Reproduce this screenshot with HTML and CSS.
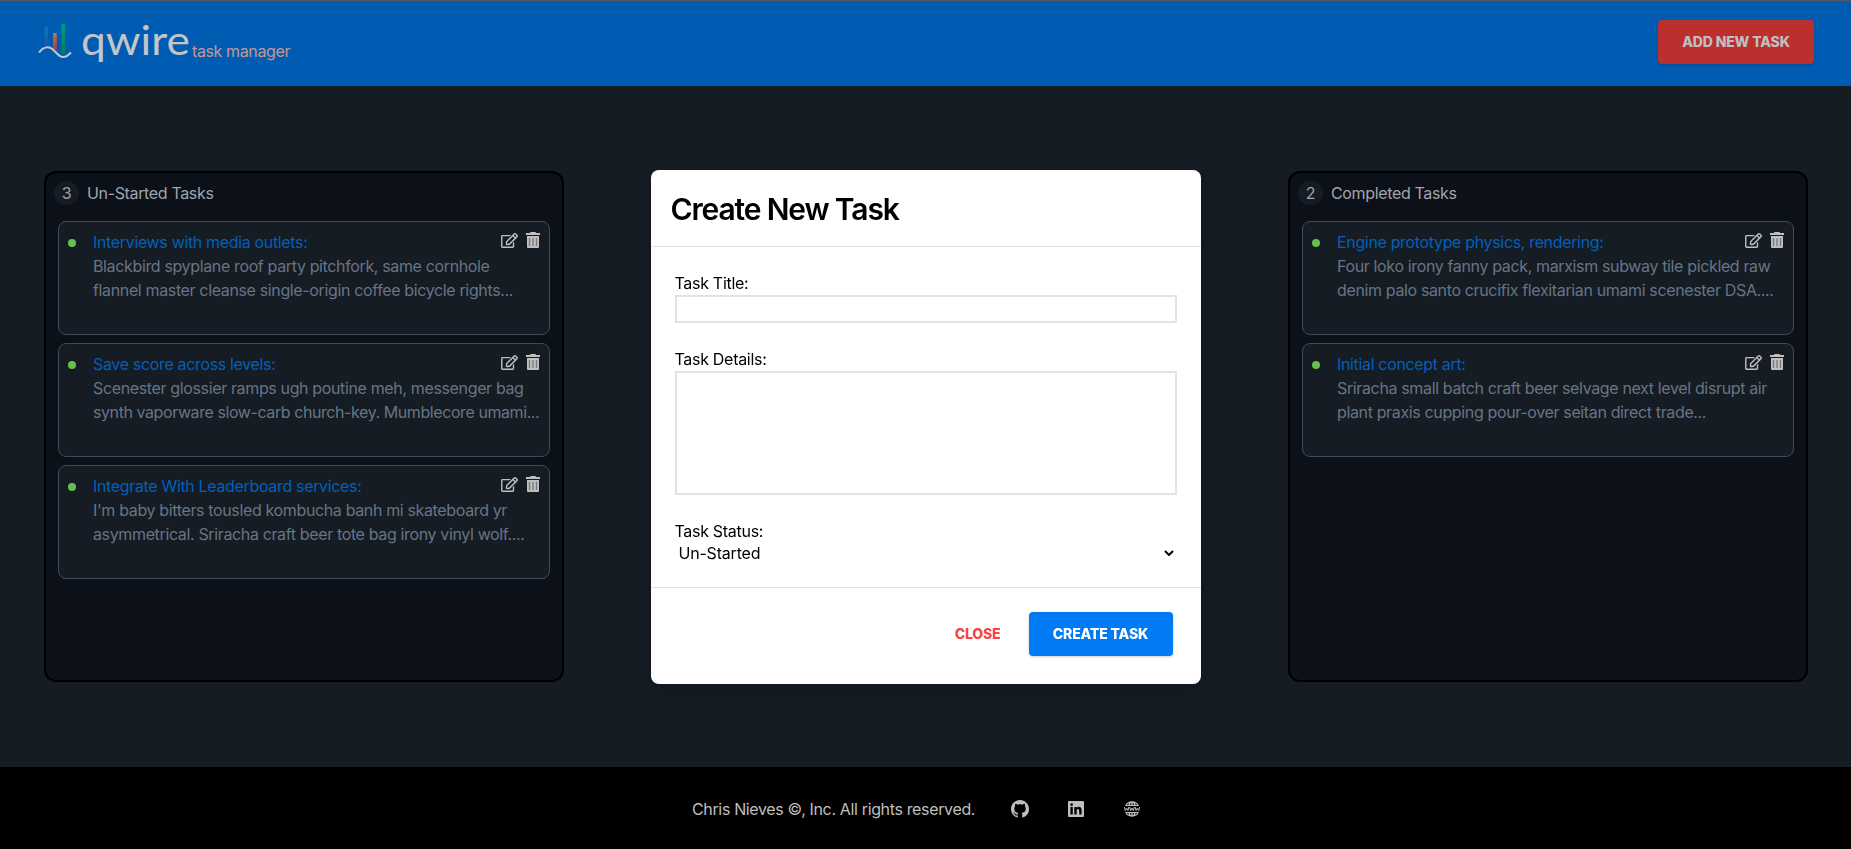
FILE: index.html
```
<!DOCTYPE html>
<html lang="en">
<head>
<meta charset="utf-8">
<title>Qwire Task Manager</title>
<link rel="stylesheet" href="styles.css">
</head>
<body>
<svg class="sprite" aria-hidden="true">
  <symbol id="edit" viewBox="0 0 576 512"><path d="M402.3 344.9l32-32c5-5 13.7-1.5 13.7 5.7V464c0 26.5-21.5 48-48 48H48c-26.5 0-48-21.5-48-48V112c0-26.5 21.5-48 48-48h273.5c7.1 0 10.7 8.6 5.7 13.7l-32 32c-1.5 1.5-3.5 2.3-5.7 2.3H48v352h352V350.5c0-2.1.8-4.1 2.3-5.6zm156.6-201.8L296.3 405.7l-90.4 10c-26.2 2.9-48.5-19.2-45.6-45.6l10-90.4L432.9 17.1c22.9-22.9 59.9-22.9 82.7 0l43.2 43.2c22.9 22.9 22.9 60 .1 82.8zM460.1 174L402 115.9 216.2 301.8l-7.3 65.3 65.3-7.3L460.1 174zm64.8-79.7l-43.2-43.2c-4.1-4.1-10.8-4.1-14.8 0L436 82l58.1 58.1 30.9-30.9c4-4.2 4-10.8-.1-14.9z"/></symbol>
  <symbol id="trash" viewBox="0 0 14 16"><path d="M4.5 0h5l.6 1H14v2H0V1h3.900zM1 4h12v11a1 1 0 0 1-1 1H2a1 1 0 0 1-1-1z"/><path d="M3.500 6v8M7 6v8M10.500 6v8" stroke="#777a7c" stroke-width="1.300"/></symbol>
</svg>
<header class="header">
  <div class="brand">
    <svg class="mark" width="36" height="40" viewBox="0 0 36 40">
      <defs>
        <linearGradient id="b" x2="0" y2="1"><stop stop-color="#007fae"/><stop offset="1" stop-color="#1a55a8"/></linearGradient>
        <linearGradient id="o" x2="0" y2="1"><stop stop-color="#bd7937"/><stop offset="1" stop-color="#bb3b35"/></linearGradient>
        <linearGradient id="g" x2="0" y2="1"><stop stop-color="#009a87"/><stop offset="1" stop-color="#008149"/></linearGradient>
      </defs>
      <rect x="6.500" y="7" width="3.500" height="18" fill="url(#b)"/>
      <rect x="15" y="13" width="3.700" height="16" fill="url(#o)"/>
      <rect x="23.500" y="4" width="3.700" height="30" fill="url(#g)"/>
      <path d="M1 32.500C5 27 11 25 16 30.500S25 41 33 32.500" fill="none" stroke="#c3c5c8" stroke-width="2"/>
    </svg>
    <span class="wordmark">qwire</span>
    <span class="tagline">task manager</span>
  </div>
  <button class="btn btn-add">ADD NEW TASK</button>
</header>
<main class="board">
  <section class="column">
    <h2 class="column-head"><span class="count">3</span><span>Un-Started Tasks</span></h2>
    <article class="card"><i class="dot"></i><div class="copy"><h3>Interviews with media outlets:</h3><p>Blackbird spyplane roof party pitchfork, same cornhole<br>flannel master cleanse single-origin coffee bicycle rights...</p></div><div class="actions"><svg class="edit"><use href="#edit"/></svg><svg class="trash"><use href="#trash"/></svg></div></article>
    <article class="card"><i class="dot"></i><div class="copy"><h3>Save score across levels:</h3><p>Scenester glossier ramps ugh poutine meh, messenger bag<br><span class="tight">synth vaporware slow-carb church-key. Mumblecore umami...</span></p></div><div class="actions"><svg class="edit"><use href="#edit"/></svg><svg class="trash"><use href="#trash"/></svg></div></article>
    <article class="card"><i class="dot"></i><div class="copy"><h3>Integrate With Leaderboard services:</h3><p>I'm baby bitters tousled kombucha banh mi skateboard yr<br>asymmetrical. Sriracha craft beer tote bag irony vinyl wolf....</p></div><div class="actions"><svg class="edit"><use href="#edit"/></svg><svg class="trash"><use href="#trash"/></svg></div></article>
  </section>
  <section class="column">
    <h2 class="column-head"><span class="count">2</span><span>Completed Tasks</span></h2>
    <article class="card"><i class="dot"></i><div class="copy"><h3>Engine prototype physics, rendering:</h3><p>Four loko irony fanny pack, marxism subway tile pickled raw<br>denim palo santo crucifix flexitarian umami scenester DSA....</p></div><div class="actions"><svg class="edit"><use href="#edit"/></svg><svg class="trash"><use href="#trash"/></svg></div></article>
    <article class="card"><i class="dot"></i><div class="copy"><h3>Initial concept art:</h3><p>Sriracha small batch craft beer selvage next level disrupt air<br>plant praxis cupping pour-over seitan direct trade...</p></div><div class="actions"><svg class="edit"><use href="#edit"/></svg><svg class="trash"><use href="#trash"/></svg></div></article>
  </section>
</main>
<footer class="footer">
  <span class="legal">Chris Nieves ©, Inc. All rights reserved.</span>
  <svg width="18" height="18" viewBox="0 0 16 16"><path d="M8 0C3.580 0 0 3.580 0 8c0 3.540 2.290 6.530 5.470 7.590.4.070.55-.17.55-.38 0-.19-.01-.82-.01-1.490-2.010.37-2.530-.49-2.690-.94-.09-.23-.48-.94-.82-1.130-.28-.15-.68-.52-.01-.53.63-.01 1.080.58 1.230.82.72 1.210 1.870.87 2.330.66.07-.52.28-.87.51-1.070-1.780-.2-3.640-.89-3.640-3.950 0-.87.31-1.590.82-2.150-.08-.2-.36-1.020.08-2.120 0 0 .67-.21 2.200.82.64-.18 1.320-.27 2-.27s1.360.09 2 .27c1.530-1.040 2.200-.82 2.200-.82.44 1.100.16 1.920.08 2.120.51.56.82 1.270.82 2.150 0 3.070-1.870 3.750-3.650 3.950.29.25.54.73.54 1.480 0 1.070-.01 1.930-.01 2.200 0 .21.15.46.55.38A8.010 8.010 0 0 0 16 8c0-4.420-3.580-8-8-8z"/></svg>
  <svg width="16" height="16" viewBox="0 0 16 16"><path fill-rule="evenodd" d="M1 0h14a1 1 0 0 1 1 1v14a1 1 0 0 1-1 1H1a1 1 0 0 1-1-1V1a1 1 0 0 1 1-1zM2.400 6v7.600h2.400V6zM3.600 2.200a1.400 1.400 0 1 0 0 2.800 1.400 1.400 0 0 0 0-2.800zM6.300 6v7.600h2.400V9.800c0-2.300 2.500-2.300 2.500 0v3.800h2.400V9c0-3.700-3.600-3.900-4.900-1.900V6z"/></svg>
  <svg class="web" width="16" height="16" viewBox="0 0 16 16">
    <path d="M1 5a7.600 7.600 0 0 1 14 0zM1 11a7.600 7.600 0 0 0 14 0z"/>
    <path d="M2.800 4Q3.800 2.500 5 2L4.400 4zM5.900 4Q6.400 2 7.300 1.500V4zM8.700 4V1.500Q9.600 2 10.100 4zM11.600 4L11 2Q12.200 2.500 13.200 4zM2.800 12Q3.800 13.500 5 14L4.400 12zM5.900 12Q6.400 14 7.300 14.500V12zM8.700 12v2.500Q9.600 14 10.100 12zM11.600 12L11 14q1.200-.5 2.200-2z" fill="#000"/>
    <path d="M.3 6l1 3.600L2.600 7l1.300 2.600L4.900 6M5.700 6l1 3.600L8 7l1.300 2.600L10.300 6M11.100 6l1 3.600L13.400 7l1.300 2.600L15.700 6" fill="none" stroke="#bfbfbf"/>
  </svg>
</footer>
<div class="overlay">
  <form class="modal">
    <h1 class="modal-head">Create New Task</h1>
    <div class="modal-body">
      <label for="t">Task Title:</label>
      <input id="t" class="field">
      <label for="d">Task Details:</label>
      <textarea id="d" class="field area"></textarea>
      <label for="s">Task Status:</label>
      <div class="select" id="s"><span>Un-Started</span><svg width="10" height="6" viewBox="0 0 10 6"><path d="M1 1l4 4 4-4" fill="none" stroke="#000" stroke-width="2"/></svg></div>
    </div>
    <div class="modal-foot"><button class="close" type="button">CLOSE</button><button class="btn btn-create" type="button">CREATE TASK</button></div>
  </form>
</div>
</body>
</html>
```
FILE: styles.css
```
* { box-sizing: border-box; margin: 0; }
body {
  height: 849px;
  display: flex;
  flex-direction: column;
  overflow: hidden;
  background: #151c23;
  font: 16px/24px Inter, "Liberation Sans", sans-serif;
  letter-spacing: -0.35px;
}
svg { display: block; fill: #bfbfbf; flex: none; }
.sprite { position: absolute; width: 0; height: 0; }
h2, h3 { font-size: 16px; font-weight: 400; }
button { border: 0; font: 800 14px/20px Inter, sans-serif; letter-spacing: -0.15px; }

.header {
  height: 86px;
  padding: 0 37px 0 38px;
  display: flex;
  justify-content: space-between;
  background: #005cb3;
  border-top: 1px solid #56595c;
}
.brand { display: flex; align-items: flex-start; color: #c3c5c8; }
.mark { margin-top: 19px; }
.wordmark {
  width: 111px;
  margin: 14px 0 0 7px;
  font: 41px/50px Lato, sans-serif;
  letter-spacing: 0;
  transform: scaleX(1.08);
  transform-origin: left;
}
.tagline { margin-top: 38px; color: #c49797; letter-spacing: -0.38px; }
.btn { height: 44px; border-radius: 4px; padding: 0; box-shadow: 0 1px 3px rgba(0, 0, 0, 0.2); }
.btn-add { width: 156px; margin-top: 19px; color: #bfbfbf; background: #bc2f2f; }

.board {
  flex: 1;
  display: flex;
  justify-content: space-between;
  padding: 85px 43px 0 44px;
}
.column {
  width: 520px;
  height: 511px;
  padding: 6px 12px;
  border: 2px solid #000;
  border-radius: 12px;
  background: #0c1018;
}
.column-head {
  display: flex;
  align-items: center;
  gap: 8px;
  height: 28px;
  margin: 0 0 14px -4px;
  color: #a0a5ad;
}
.count { width: 25px; height: 24px; border-radius: 12px; background: #151c23; text-align: center; }
.card {
  height: 114px;
  margin-bottom: 8px;
  padding: 8px 9px;
  display: flex;
  border: 1px solid #3e4b5c;
  border-radius: 8px;
  background: #151c23;
  white-space: nowrap;
}
.dot { width: 8px; height: 8px; margin: 9px 17px 0 0; border-radius: 50%; background: #6abf4b; }
.copy { flex: 1; width: 0; color: #687486; letter-spacing: -0.36px; }
.copy h3 { color: #0060bb; letter-spacing: -0.34px; }
.tight { letter-spacing: -0.42px; }
.actions { display: flex; gap: 8px; padding-top: 2px; }
.edit { width: 17px; height: 15px; margin-top: 1px; }
.trash { width: 14px; height: 16px; }

.footer {
  height: 82px;
  padding: 2px 0 0 692px;
  display: flex;
  align-items: center;
  gap: 39px;
  background: #000;
  color: #bfbfbf;
  white-space: nowrap;
}
.legal { width: 280px; }
.web { margin-left: 1px; }

.overlay { position: fixed; inset: 0; padding-top: 170px; display: flex; justify-content: center; align-items: flex-start; }
.modal {
  width: 550px;
  height: 514px;
  border-radius: 8px;
  background: #fff;
  color: #000;
  box-shadow: 0 4px 16px rgba(0, 0, 0, 0.2);
}
.modal-head {
  height: 77px;
  padding: 20px 20px 0;
  border-bottom: 1px solid #dce3ea;
  font: 600 30px/38px Inter, sans-serif;
  letter-spacing: -1.15px;
}
.modal-body {
  height: 341px;
  padding: 24px;
  display: flex;
  flex-direction: column;
  border-bottom: 1px solid #dce3ea;
  letter-spacing: -0.3px;
}
.field { flex: none; width: 502px; height: 28px; margin-bottom: 24px; padding: 0; border: 2px solid #e1e1e8; background: #fff; resize: none; outline: 0; }
.area { height: 124px; }
.select { height: 20px; padding: 0 3px 0 4px; display: flex; align-items: center; justify-content: space-between; letter-spacing: -0.2px; }
.modal-foot { display: flex; justify-content: flex-end; align-items: center; gap: 28px; padding: 24px 28px 0 0; }
.close { padding: 0; background: none; color: #fa4343; }
.btn-create { width: 144px; color: #fff; background: #007bf3; }
```
